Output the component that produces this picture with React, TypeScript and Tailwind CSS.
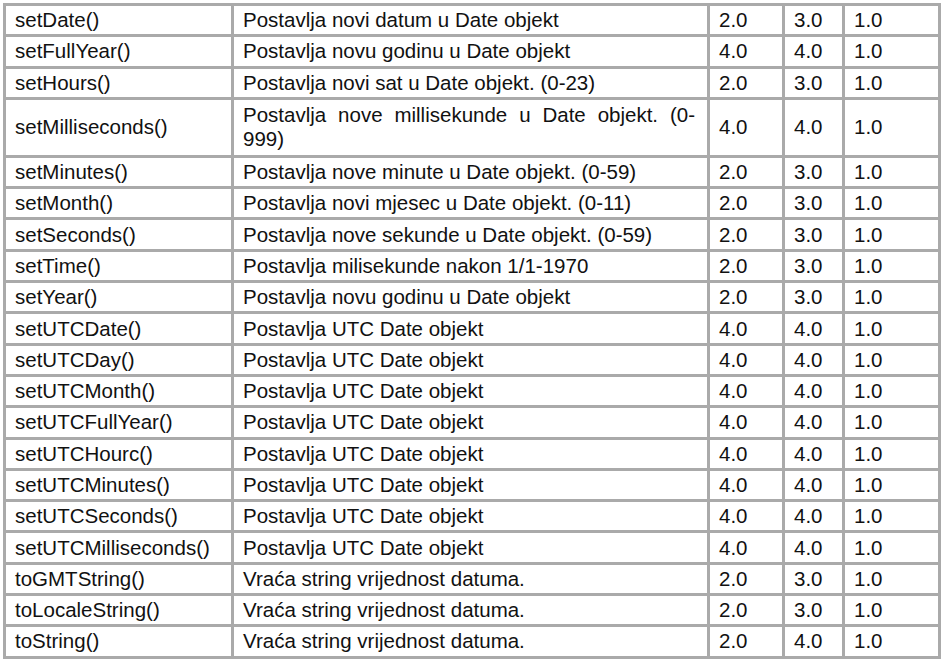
const rows: [string, string, string, string, string][] = [
  ["setDate()", "Postavlja novi datum u Date objekt", "2.0", "3.0", "1.0"],
  ["setFullYear()", "Postavlja novu godinu u Date objekt", "4.0", "4.0", "1.0"],
  ["setHours()", "Postavlja novi sat u Date objekt. (0-23)", "2.0", "3.0", "1.0"],
  ["setMilliseconds()", "Postavlja nove millisekunde u Date objekt. (0-999)", "4.0", "4.0", "1.0"],
  ["setMinutes()", "Postavlja nove minute u Date objekt. (0-59)", "2.0", "3.0", "1.0"],
  ["setMonth()", "Postavlja novi mjesec u Date objekt. (0-11)", "2.0", "3.0", "1.0"],
  ["setSeconds()", "Postavlja nove sekunde u Date objekt. (0-59)", "2.0", "3.0", "1.0"],
  ["setTime()", "Postavlja milisekunde nakon 1/1-1970", "2.0", "3.0", "1.0"],
  ["setYear()", "Postavlja novu godinu u Date objekt", "2.0", "3.0", "1.0"],
  ["setUTCDate()", "Postavlja UTC Date objekt", "4.0", "4.0", "1.0"],
  ["setUTCDay()", "Postavlja UTC Date objekt", "4.0", "4.0", "1.0"],
  ["setUTCMonth()", "Postavlja UTC Date objekt", "4.0", "4.0", "1.0"],
  ["setUTCFullYear()", "Postavlja UTC Date objekt", "4.0", "4.0", "1.0"],
  ["setUTCHourc()", "Postavlja UTC Date objekt", "4.0", "4.0", "1.0"],
  ["setUTCMinutes()", "Postavlja UTC Date objekt", "4.0", "4.0", "1.0"],
  ["setUTCSeconds()", "Postavlja UTC Date objekt", "4.0", "4.0", "1.0"],
  ["setUTCMilliseconds()", "Postavlja UTC Date objekt", "4.0", "4.0", "1.0"],
  ["toGMTString()", "Vraća string vrijednost datuma.", "2.0", "3.0", "1.0"],
  ["toLocaleString()", "Vraća string vrijednost datuma.", "2.0", "3.0", "1.0"],
  ["toString()", "Vraća string vrijednost datuma.", "2.0", "4.0", "1.0"],
];

const cell = "border-[3px] border-[#aaaaaa] px-[9px] py-0 align-middle leading-[24px]";

export default function App() {
  return (
    <div className="min-h-[665px] w-[944px] bg-white pt-[3px] pl-[3px]">
      <table
        className="table-fixed border-collapse text-[20.5px] text-[#111] w-[935px]"
        style={{ fontFamily: '"Liberation Sans", Arial, sans-serif' }}
      >
        <colgroup>
          <col className="w-[228px]" />
          <col className="w-[476px]" />
          <col className="w-[75px]" />
          <col className="w-[60px]" />
          <col className="w-[96px]" />
        </colgroup>
        <tbody>
          {rows.map((r) => (
            <tr key={r[0]} className={r[0] === "setMilliseconds()" ? "h-[58px]" : "h-[31.3px]"}>
              <td className={cell}>{r[0]}</td>
              <td className={`${cell} text-justify pr-[11px]`}>
                <div className="w-[452px]">{r[1]}</div>
              </td>
              <td className={cell}>{r[2]}</td>
              <td className={cell}>{r[3]}</td>
              <td className={cell}>{r[4]}</td>
            </tr>
          ))}
        </tbody>
      </table>
    </div>
  );
}
